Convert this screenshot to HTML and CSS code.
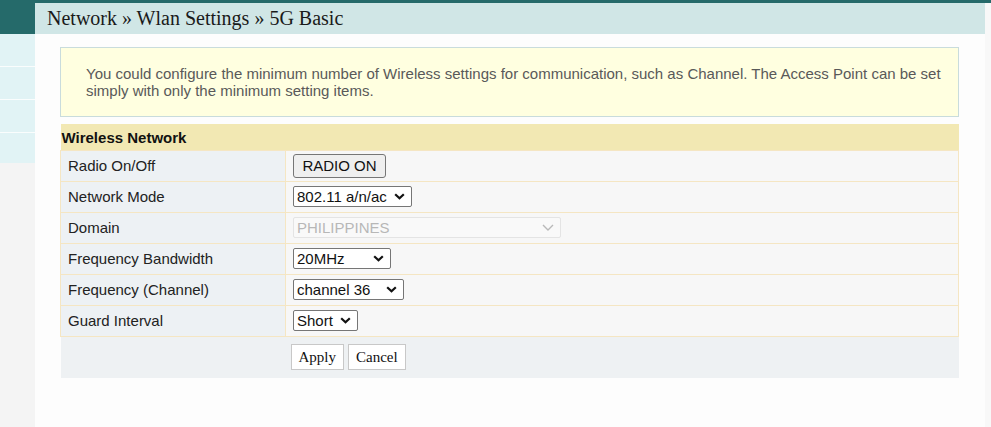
FILE: index.html
```html
<!DOCTYPE html>
<html>
<head>
<meta charset="utf-8">
<link rel="stylesheet" href="styles.css">
</head>
<body>
<div class="topline"></div>
<div class="page">
  <nav class="sidebar">
    <div class="side-head"></div>
    <div class="side-item"></div>
    <div class="side-item"></div>
    <div class="side-item"></div>
    <div class="side-item"></div>
  </nav>
  <main class="main">
    <div class="crumb">Network » Wlan Settings » 5G Basic</div>
    <div class="content">
      <div class="info">You could configure the minimum number of Wireless settings for communication, such as Channel. The Access Point can be set simply with only the minimum setting items.</div>
      <table class="form">
        <tr><th colspan="2" class="title">Wireless Network</th></tr>
        <tr><td class="lbl">Radio On/Off</td><td class="val"><button class="radio">RADIO ON</button></td></tr>
        <tr><td class="lbl">Network Mode</td><td class="val"><select class="sel w-mode"><option>802.11 a/n/ac</option></select></td></tr>
        <tr><td class="lbl">Domain</td><td class="val"><select class="sel w-dom" disabled><option>PHILIPPINES</option></select></td></tr>
        <tr><td class="lbl">Frequency Bandwidth</td><td class="val"><select class="sel w-bw"><option>20MHz</option></select></td></tr>
        <tr><td class="lbl">Frequency (Channel)</td><td class="val"><select class="sel w-ch"><option>channel 36</option></select></td></tr>
        <tr><td class="lbl">Guard Interval</td><td class="val"><select class="sel w-gi"><option>Short</option></select></td></tr>
        <tr class="actions"><td></td><td class="act"><button class="btn">Apply</button><button class="btn">Cancel</button></td></tr>
      </table>
    </div>
  </main>
  <div class="gutter"></div>
</div>
</body>
</html>
```
FILE: styles.css
```css
html, body {
  margin: 0;
  padding: 0;
  height: 100%;
}
body {
  background: #f7f7f7;
  font-family: "Liberation Sans", Arial, sans-serif;
  overflow: hidden;
}
.topline {
  height: 3px;
  background: #256a6a;
}
.page {
  display: flex;
  height: 424px;
}
.sidebar {
  width: 35px;
  flex: none;
  background: #f4f4f4;
  margin-top: -3px;
}
.side-head {
  height: 34px;
  background: #256a6a;
}
.side-item {
  height: 32px;
  background: #e1f3f5;
  border-bottom: 1px solid #fafdfd;
}
.side-item:last-child {
  height: 30px;
  border-bottom: none;
}
.main {
  width: 950px;
  flex: none;
  background: #fdfdfd;
}
.gutter {
  flex: 1;
  background: #f8f8f8;
}
.crumb {
  height: 31px;
  background: #d0e6e6;
  font-family: "Liberation Serif", "Times New Roman", serif;
  font-size: 20px;
  color: #1a1a1a;
  line-height: 31px;
  padding-left: 12px;
}
.content {
  padding: 13px 26px 0 25px;
}
.info {
  background: #ffffe0;
  border: 1px solid #c9dcdc;
  color: #595959;
  font-size: 15px;
  line-height: 17px;
  padding: 17px 16px 16px 25px;
  height: 35px;
}
.form {
  margin-top: 7px;
  width: 899px;
  border-collapse: collapse;
  font-size: 15px;
}
.title {
  background: #f2e8b3;
  text-align: left;
  font-weight: bold;
  color: #111;
  height: 26px;
  padding: 2px 1px 0;
  box-sizing: border-box;
}
.form td {
  border: 1px solid #f5e6c3;
  height: 31px;
  padding: 0;
  box-sizing: border-box;
}
.lbl {
  width: 225px;
  background: #edf1f4;
  color: #222;
  padding-left: 7px !important;
}
.val {
  background: #f7f7f7;
  padding-left: 7px !important;
}
.radio {
  font-family: "Liberation Sans", Arial, sans-serif;
  font-size: 15px;
  height: 24px;
  width: 93px;
  padding: 0;
  background: #efefef;
  border: 1px solid #767676;
  border-radius: 3px;
  color: #111;
  vertical-align: middle;
}
.sel {
  -webkit-appearance: none;
  appearance: none;
  font-family: "Liberation Sans", Arial, sans-serif;
  font-size: 15px;
  height: 21px;
  color: #111;
  background-color: #fff;
  background-image: url("data:image/svg+xml;utf8,<svg xmlns='http://www.w3.org/2000/svg' width='11' height='7' viewBox='0 0 11 7'><path d='M1.2 1.2 L5.5 5.3 L9.8 1.2' fill='none' stroke='%23111' stroke-width='2.2'/></svg>");
  background-repeat: no-repeat;
  background-position: right 6px center;
  border: 1px solid #767676;
  border-radius: 2px;
  padding: 0 0 0 3px;
  vertical-align: middle;
}
.w-mode { width: 119px; }
.w-dom {
  width: 268px;
  color: #9d9d9d;
  border-color: #dcdcdc;
  background-color: #fafafa;
  background-image: url("data:image/svg+xml;utf8,<svg xmlns='http://www.w3.org/2000/svg' width='12' height='7' viewBox='0 0 12 7'><path d='M1 1 L6 6 L11 1' fill='none' stroke='%23a0a0a0' stroke-width='1.4'/></svg>");
  background-position: right 6px center;
}
.w-bw { width: 98px; }
.w-ch { width: 111px; }
.w-gi { width: 65px; }
.actions td {
  background: #eef1f3;
  border: none;
  height: 42px;
}
.act {
  padding-left: 5px !important;
}
.btn {
  font-family: "Liberation Serif", "Times New Roman", serif;
  font-size: 15px;
  background: #fff;
  border: 1px solid #c8c8c8;
  height: 26px;
  padding: 0 7px;
  margin-right: 4px;
  color: #111;
  border-radius: 0;
  vertical-align: middle;
}
```
